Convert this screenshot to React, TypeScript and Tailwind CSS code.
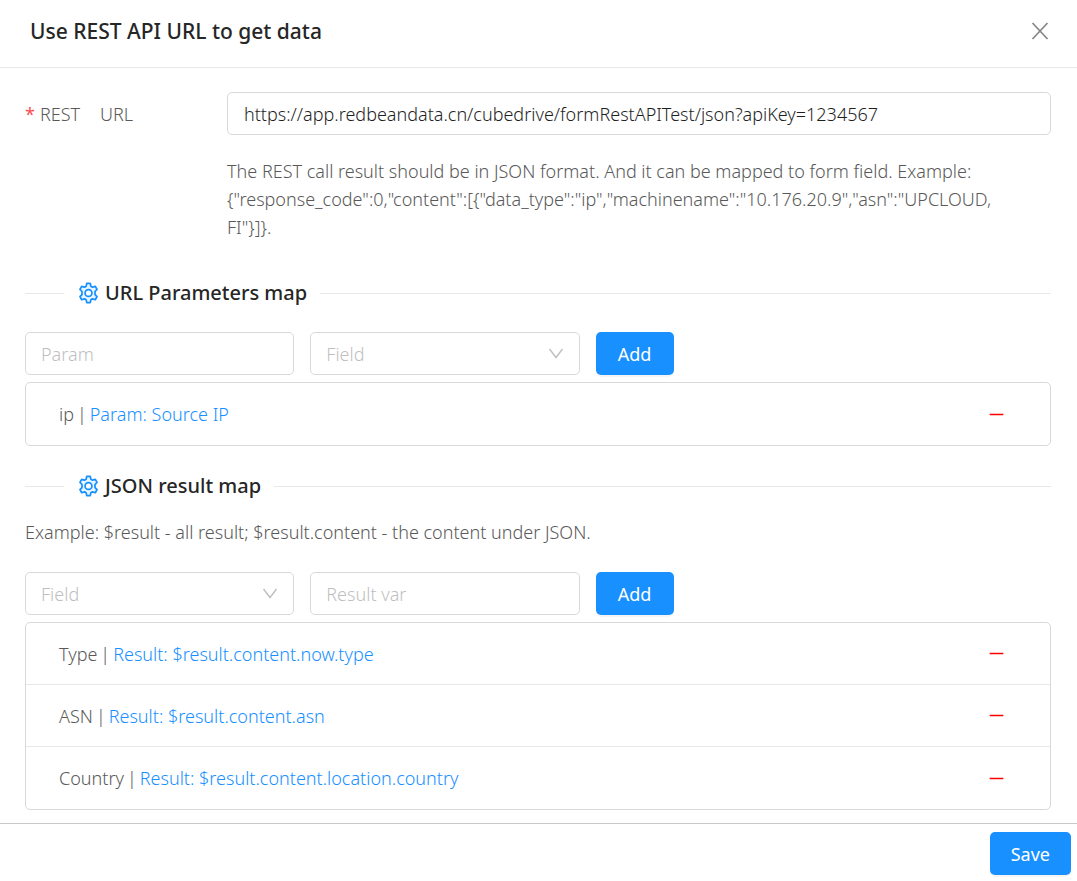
import { useState } from "react"
import { AiOutlineMinus } from "react-icons/ai"

interface MapItem {
  name: string
  value: string
}

const paramItems: MapItem[] = [{ name: "ip", value: "Param: Source IP" }]

const resultItems: MapItem[] = [
  { name: "Type", value: "Result: $result.content.now.type" },
  { name: "ASN", value: "Result: $result.content.asn" },
  { name: "Country", value: "Result: $result.content.location.country" },
]

function GearIcon() {
  return (
    <svg viewBox="0 0 24 24" className="h-[23px] w-[23px]" fill="#e6f7ff" stroke="#1890ff" strokeWidth="1.8" strokeLinejoin="round" aria-hidden="true">
      <path d="M10.2 1.500h3.600l.7 3 1.600.9 3-.9 1.800 3.200-2.100 2.200v3.200l2.100 2.200-1.800 3.200-3-.9-1.600.9-.7 3h-3.600l-.7-3-1.600-.9-3 .9-1.800-3.200 2.100-2.200v-3.200L3.100 7.700l1.800-3.200 3 .9 1.600-.9z" />
      <circle cx="12" cy="11.500" r="3.600" fill="#fff" />
    </svg>
  )
}

function SectionTitle({ title }: { title: string }) {
  return (
    <div className="flex items-center">
      <div className="h-px w-[39px] bg-[#e8e8e8]"></div>
      <h2 className="flex items-center gap-[5px] px-[13px] text-xl leading-8 font-medium text-[#262626]">
        <GearIcon />
        {title}
      </h2>
      <div className="h-px flex-1 bg-[#e8e8e8]"></div>
    </div>
  )
}

function TextField({ label }: { label: string }) {
  return (
    <input
      type="text"
      aria-label={label}
      placeholder={label}
      className="h-[43px] w-[26.25%] rounded-[5px] border border-[#d9d9d9] px-[15px] placeholder:text-[#bfbfbf] focus:outline-none"
    />
  )
}

function FieldSelect() {
  return (
    <div className="relative w-[26.25%]">
      <select
        aria-label="Field"
        defaultValue=""
        className="h-[43px] w-full appearance-none rounded-[5px] border border-[#d9d9d9] bg-white px-[15px] text-[#bfbfbf] focus:outline-none"
      >
        <option value="">Field</option>
        <option value="type">Type</option>
        <option value="asn">ASN</option>
        <option value="country">Country</option>
      </select>
      <svg
        viewBox="0 0 16 16"
        className="pointer-events-none absolute top-3.5 right-4 h-4 w-4"
        fill="none"
        stroke="#bfbfbf"
        strokeWidth="1.4"
        aria-hidden="true"
      >
        <path d="M1.5 3 8 11.5 14.5 3" />
      </svg>
    </div>
  )
}

function PrimaryButton({ label }: { label: string }) {
  return (
    <button
      type="button"
      className="h-[43px] min-w-[78px] rounded-[5px] bg-[#1890ff] px-[21px] font-normal text-white shadow-[0_2px_0_rgba(0,0,0,0.045)]"
    >
      {label}
    </button>
  )
}

function MapList({ items }: { items: MapItem[] }) {
  return (
    <ul className="mt-[7px] divide-y divide-[#e8e8e8] rounded-[5px] border border-[#d9d9d9]">
      {items.map((item) => (
        <li key={item.name} className="flex h-[62px] items-center justify-between pr-11 pl-[33px]">
          <div className="flex items-center gap-[3px]">
            <span>{item.name}</span>
            <span>|</span>
            <a href="#" className="text-[#1890ff]">{item.value}</a>
          </div>
          <button type="button" aria-label={`Remove ${item.name}`} className="text-[#ff0000]">
            <AiOutlineMinus className="h-[19px] w-[19px]" />
          </button>
        </li>
      ))}
    </ul>
  )
}

export default function App() {
  const [url, setUrl] = useState("https://app.redbeandata.cn/cubedrive/formRestAPITest/json?apiKey=1234567")

  return (
    <div className="flex min-h-screen flex-col bg-white font-['Noto_Sans','Open_Sans',sans-serif] text-lg leading-7 font-light text-[#595959]">
      <header className="flex h-[68px] items-center justify-between border-b border-[#e8e8e8] pr-[27px] pb-1.5 pl-[30px]">
        <h1 className="text-[21px] font-medium text-[#262626]">Use REST API URL to get data</h1>
        <button type="button" aria-label="Close">
          <svg viewBox="0 0 20 20" className="h-5 w-5" fill="none" stroke="#858585" strokeWidth="1.7" aria-hidden="true">
            <path d="M2.5 2 17.5 18M17.5 2 2.5 18" />
          </svg>
        </button>
      </header>

      <main className="flex-1 pt-6 pr-[26px] pb-[13px] pl-[25px]">
        <div className="grid grid-cols-[202px_1fr]">
          <label htmlFor="rest-url" className="flex h-[43px] items-center">
            <span className="mr-[5px] font-normal text-[#ff4d4f]">*</span>
            <span className="mr-5">REST</span>
            <span>URL</span>
          </label>
          <div>
            <input
              id="rest-url"
              type="text"
              value={url}
              onChange={(e) => setUrl(e.target.value)}
              className="h-[43px] w-full rounded-[5px] border border-[#d9d9d9] px-4 text-[#1f1f1f] focus:outline-none"
            />
            <p className="mt-[22px] pr-6">
              The REST call result should be in JSON format. And it can be mapped to form field. Example:
              {' {"response_code":0,"content":[{"data_type":"ip","machinename":"10.176.20.9","asn":"UPCLOUD, FI"}]}.'}
            </p>
          </div>
        </div>

        <section className="mt-9">
          <SectionTitle title="URL Parameters map" />
          <div className="mt-[23px] flex gap-4">
            <TextField label="Param" />
            <FieldSelect />
            <PrimaryButton label="Add" />
          </div>
          <MapList items={paramItems} />
        </section>

        <section className="mt-6">
          <SectionTitle title="JSON result map" />
          <p className="mt-4">Example: $result - all result; $result.content - the content under JSON.</p>
          <div className="mt-[26px] flex gap-4">
            <FieldSelect />
            <TextField label="Result var" />
            <PrimaryButton label="Add" />
          </div>
          <MapList items={resultItems} />
        </section>
      </main>

      <footer className="flex justify-end border-t border-[#c8c8c8] px-1.5 pt-2 pb-1.5">
        <PrimaryButton label="Save" />
      </footer>
    </div>
  )
}
